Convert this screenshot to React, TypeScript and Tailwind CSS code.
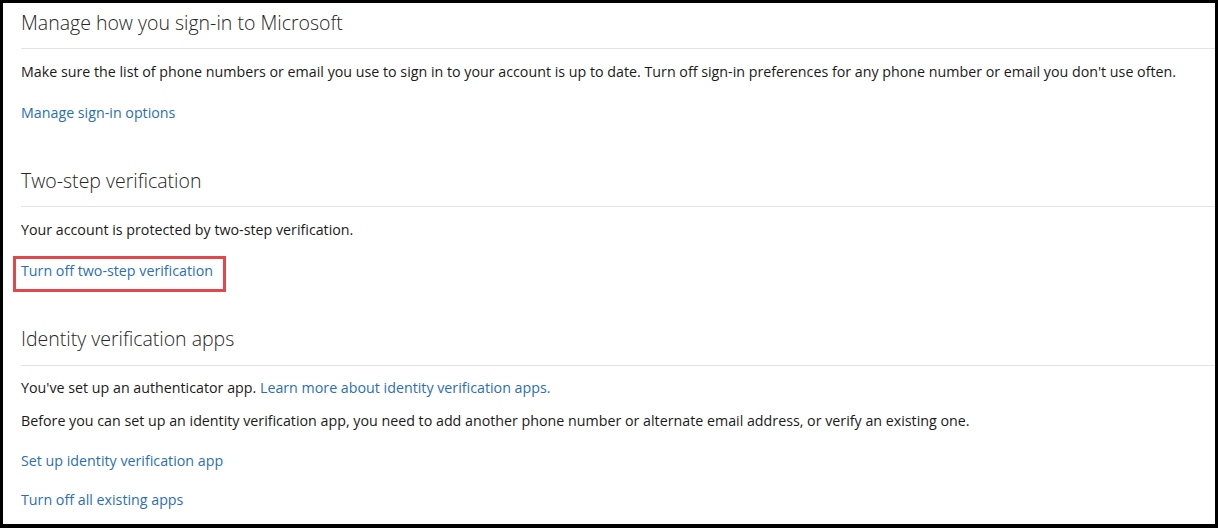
import React from "react";

const font = { fontFamily: '"Segoe UI", "Open Sans", "Noto Sans", sans-serif' };

function Heading({ children, className = "" }: { children: React.ReactNode; className?: string }) {
  return (
    <h2 className={`text-[19.5px] leading-[28px] font-light text-[#262626] ${className}`}>{children}</h2>
  );
}

function Divider({ className = "" }: { className?: string }) {
  return <div className={`h-px bg-[#e3e3e3] ${className}`} />;
}

function Body({ children, className = "" }: { children: React.ReactNode; className?: string }) {
  return <p className={`text-[14.25px] leading-[20px] text-[#1a1a1a] ${className}`}>{children}</p>;
}

function Link({ children, className = "" }: { children: React.ReactNode; className?: string }) {
  return (
    <a href="#" className={`text-[14.25px] leading-[20px] text-[#2a6fb6] ${className}`}>
      {children}
    </a>
  );
}

function LinkRow({ children, className = "" }: { children: React.ReactNode; className?: string }) {
  return <div className={`relative h-[20px] text-[14.25px] leading-[20px] ${className}`}>{children}</div>;
}

export default function App() {
  return (
    <div
      style={font}
      className="w-[1218px] h-[528px] bg-white border-black border-x-[3px] border-t-[3px] border-b-4 overflow-hidden"
    >
      <div className="pl-[18px] flex flex-col">
        {/* Sign-in preferences */}
        <Heading className="mt-[6px]">Manage how you sign-in to Microsoft</Heading>
        <Divider className="mt-[11px]" />
        <Body className="mt-[13px]">
          Make sure the list of phone numbers or email you use to sign in to your account is up to date. Turn off
          sign-in preferences for any phone number or email you don't use often.
        </Body>
        <LinkRow className="mt-[21px]">
          <Link>Manage sign-in options</Link>
        </LinkRow>

        {/* Two-step verification */}
        <Heading className="mt-[44px]">Two-step verification</Heading>
        <Divider className="mt-[11px]" />
        <Body className="mt-[13px]">Your account is protected by two-step verification.</Body>
        <LinkRow className="mt-[21px]">
          <Link>Turn off two-step verification</Link>
          <span className="absolute left-[-8px] top-[-5px] w-[213px] h-[36px] border-[3px] border-[#e2474b] pointer-events-none" />
        </LinkRow>

        {/* Identity verification apps */}
        <Heading className="mt-[44px]">Identity verification apps</Heading>
        <Divider className="mt-[12px]" />
        <Body className="mt-[12px]">
          You've set up an authenticator app. <Link>Learn more about identity verification apps.</Link>
        </Body>
        <Body className="mt-[13px]">
          Before you can set up an identity verification app, you need to add another phone number or alternate
          email address, or verify an existing one.
        </Body>
        <LinkRow className="mt-[20px]">
          <Link>Set up identity verification app</Link>
        </LinkRow>
        <LinkRow className="mt-[19px]">
          <Link>Turn off all existing apps</Link>
        </LinkRow>
      </div>
    </div>
  );
}
